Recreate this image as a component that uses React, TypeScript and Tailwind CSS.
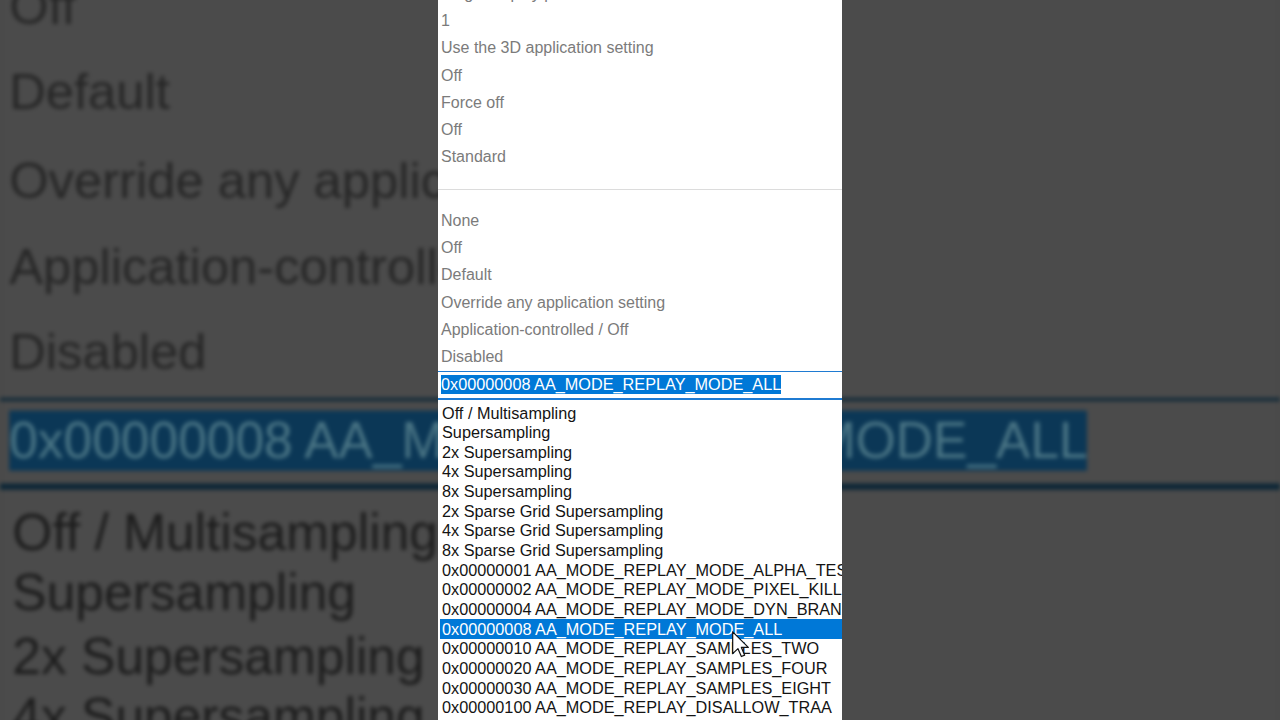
const topValues = [
  'Single display performance mode',
  '1',
  'Use the 3D application setting',
  'Off',
  'Force off',
  'Off',
  'Standard',
];

const midValues = [
  'None',
  'Off',
  'Default',
  'Override any application setting',
  'Application-controlled / Off',
  'Disabled',
];

const options = [
  'Off / Multisampling',
  'Supersampling',
  '2x Supersampling',
  '4x Supersampling',
  '8x Supersampling',
  '2x Sparse Grid Supersampling',
  '4x Sparse Grid Supersampling',
  '8x Sparse Grid Supersampling',
  '0x00000001 AA_MODE_REPLAY_MODE_ALPHA_TEST',
  '0x00000002 AA_MODE_REPLAY_MODE_PIXEL_KILL',
  '0x00000004 AA_MODE_REPLAY_MODE_DYN_BRANCH',
  '0x00000008 AA_MODE_REPLAY_MODE_ALL',
  '0x00000010 AA_MODE_REPLAY_SAMPLES_TWO',
  '0x00000020 AA_MODE_REPLAY_SAMPLES_FOUR',
  '0x00000030 AA_MODE_REPLAY_SAMPLES_EIGHT',
  '0x00000100 AA_MODE_REPLAY_DISALLOW_TRAA',
  '0x00000200 AA_MODE_REPLAY_MODE_MASK',
];

const selected = '0x00000008 AA_MODE_REPLAY_MODE_ALL';

function Cursor() {
  return (
    <svg
      className="absolute left-[294px] top-[631px]"
      width="17"
      height="27"
      viewBox="0 0 12.5 19.5"
    >
      <path
        d="M0.5 0.5 V16.5 L4.4 12.8 L6.9 18.6 L9.3 17.6 L6.9 11.9 H12 Z"
        fill="#fff"
        stroke="#111"
        strokeWidth="0.9"
        strokeLinejoin="round"
      />
    </svg>
  );
}

// dim = the darkened copy used as the backdrop of the vertical video
function Panel({ cursor, dim }: { cursor?: boolean; dim?: boolean }) {
  const gray = dim ? 'text-[#262626]' : 'text-[#7b7b7b]';
  const hi = dim ? 'bg-[#0b3756] text-[#4a7585]' : 'bg-[#0078d7] text-white';

  return (
    <div
      className={`relative h-[720px] w-[404px] shrink-0 overflow-hidden font-['Liberation_Sans',Arial,sans-serif] text-[16px] ${
        dim ? 'bg-[#4b4b4b]' : 'bg-white'
      }`}
    >
      {/* values column */}
      <div className={`-mt-[20px] ${gray}`}>
        {topValues.map((v, i) => (
          <div key={i} className="flex h-[27.3px] items-center whitespace-nowrap px-[3px]">
            {v}
          </div>
        ))}
      </div>

      <div className={`mt-[18px] h-px ${dim ? 'bg-[#424242]' : 'bg-[#dcdcdc]'}`} />

      <div className={`mt-[17px] ${gray}`}>
        {midValues.map((v, i) => (
          <div key={i} className="flex h-[27.3px] items-center whitespace-nowrap px-[3px]">
            {v}
          </div>
        ))}
      </div>

      {/* combo box being edited */}
      <div
        className={`flex h-[29px] items-center border-t border-b-2 px-[3px] text-[16.25px] ${
          dim ? 'border-[#0c2636]' : 'border-[#1f7bd2]'
        }`}
      >
        <span className={`whitespace-nowrap leading-[19px] ${hi}`}>{selected}</span>
      </div>

      {/* dropdown list */}
      <div className={`pl-[2px] pt-[3px] text-[16.25px] ${dim ? 'text-[#1c1c1c]' : 'text-[#141414]'}`}>
        {options.map((o) => (
          <div
            key={o}
            className={`flex h-[19.67px] items-center whitespace-nowrap px-[2px] ${o === selected ? hi : ''}`}
          >
            {o}
          </div>
        ))}
      </div>

      {cursor && <Cursor />}
    </div>
  );
}

export default function App() {
  return (
    <div className="relative flex h-[720px] w-full justify-center overflow-hidden bg-[#4b4b4b]">
      {/* enlarged, dimmed copy behind the vertical video */}
      <div className="absolute inset-0 overflow-hidden" aria-hidden="true">
        <div className="flex h-full w-full translate-y-[3px] scale-[3.17] items-center justify-center blur-[0.7px]">
          <Panel dim />
        </div>
      </div>

      <div className="relative z-10">
        <Panel cursor />
      </div>
    </div>
  );
}
